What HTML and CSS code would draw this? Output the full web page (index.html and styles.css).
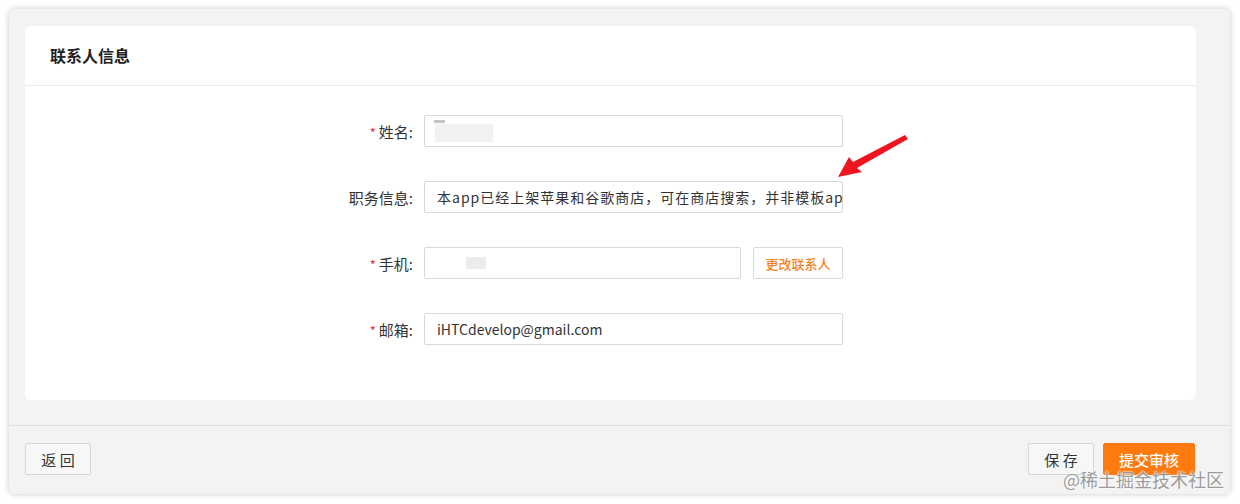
FILE: index.html
```html
<!DOCTYPE html>
<html lang="zh-CN">
<head>
    <meta charset="UTF-8">
    <title>联系人信息</title>
    <link rel="stylesheet" href="styles.css">
</head>
<body>
    <div class="panel">
        <div class="main">
            <div class="card">
                <div class="card-head">联系人信息</div>
                <div class="form">
                    <div class="row">
                        <label class="label"><span class="req">*</span>姓名:</label>
                        <div class="input">
                            <span class="blur-a"></span>
                            <span class="blur-b"></span>
                        </div>
                    </div>
                    <div class="row">
                        <label class="label">职务信息:</label>
                        <div class="input spaced">本app已经上架苹果和谷歌商店，可在商店搜索，并非模板app</div>
                    </div>
                    <div class="row">
                        <label class="label"><span class="req">*</span>手机:</label>
                        <div class="input short">
                            <span class="blur-c"></span>
                        </div>
                        <button class="btn-change">更改联系人</button>
                    </div>
                    <div class="row">
                        <label class="label"><span class="req">*</span>邮箱:</label>
                        <div class="input">iHTCdevelop@gmail.com</div>
                    </div>
                </div>
            </div>
        </div>
        <div class="footer">
            <button class="btn">返 回</button>
            <div class="footer-right">
                <button class="btn">保 存</button>
                <button class="btn primary">提交审核</button>
            </div>
        </div>
    </div>

    <svg class="arrow" width="80" height="50" viewBox="830 130 80 50">
        <path d="M838 177 L849 157 L853 162 L905 135 L908 139 L857 168 L862 172 Z" fill="#f0141e"/>
    </svg>

    <div class="watermark">@稀土掘金技术社区</div>
</body>
</html>
```

FILE: styles.css
```css
body {
    margin: 0;
    padding: 9px 10px 10px 9px;
    background-color: #fff;
    font-family: "PingFang SC", "Noto Sans CJK SC", "Noto Sans", sans-serif;
    color: #333;
}

.panel {
    width: 1221px;
    height: 485px;
    background-color: #f3f3f3;
    border-radius: 6px;
    box-shadow: 0 0 6px rgba(0, 0, 0, 0.22);
    display: flex;
    flex-direction: column;
}

.main {
    padding: 17px 34px 25px 16px;
    border-bottom: 1px solid #e0e0e0;
}

.card {
    background-color: #fff;
    border-radius: 6px;
    height: 374px;
}

.card-head {
    height: 59px;
    line-height: 59px;
    padding-left: 25px;
    font-size: 16px;
    font-weight: bold;
    color: #222;
    border-bottom: 1px solid #ececec;
}

.form {
    padding: 29px 0 0 271px;
    display: flex;
    flex-direction: column;
    gap: 34px;
}

.row {
    display: flex;
    align-items: center;
    height: 32px;
}

.label {
    width: 121px;
    margin-right: 7px;
    padding-right: 4px;
    box-sizing: border-box;
    text-align: right;
    font-size: 15px;
    color: #333;
}

.req {
    color: #e8343c;
    font-size: 13px;
    margin-right: 3px;
}

.input {
    position: relative;
    box-sizing: border-box;
    width: 419px;
    height: 32px;
    border: 1px solid #d9d9d9;
    border-radius: 2px;
    padding: 0 12px;
    line-height: 30px;
    font-size: 14px;
    color: #333;
    white-space: nowrap;
    overflow: hidden;
}

.input.spaced {
    letter-spacing: 1px;
}

.input.short {
    width: 317px;
}

.blur-a {
    position: absolute;
    left: 9px;
    top: 4px;
    width: 11px;
    height: 3px;
    background-color: #c4c4c4;
}

.blur-b {
    position: absolute;
    left: 10px;
    top: 8px;
    width: 58px;
    height: 18px;
    background-color: #f2f2f2;
}

.blur-c {
    position: absolute;
    left: 41px;
    top: 9px;
    width: 20px;
    height: 12px;
    background-color: #ececec;
}

.btn-change {
    margin-left: 12px;
    width: 90px;
    height: 32px;
    background-color: #fff;
    border: 1px solid #d9d9d9;
    border-radius: 2px;
    font-family: inherit;
    font-size: 13px;
    font-weight: 500;
    color: #f5821f;
}

.footer {
    flex: 1;
    display: flex;
    justify-content: space-between;
    padding: 17px 35px 0 16px;
}

.footer-right {
    display: flex;
    gap: 9px;
}

.btn {
    height: 32px;
    min-width: 66px;
    padding: 0 14px;
    background-color: #f7f7f7;
    border: 1px solid #d6d6d6;
    border-radius: 2px;
    font-family: inherit;
    font-size: 15px;
    color: #333;
}

.btn.primary {
    min-width: 92px;
    background-color: #ff7a0e;
    border-color: #ff7a0e;
    font-weight: 500;
    color: #fff;
}

.arrow {
    position: absolute;
    left: 830px;
    top: 130px;
}

.watermark {
    position: absolute;
    left: 1063px;
    top: 466px;
    font-size: 18px;
    color: #9a9a9a;
    text-shadow: 0 0 2px #fff, 0 0 2px #fff;
}
```
